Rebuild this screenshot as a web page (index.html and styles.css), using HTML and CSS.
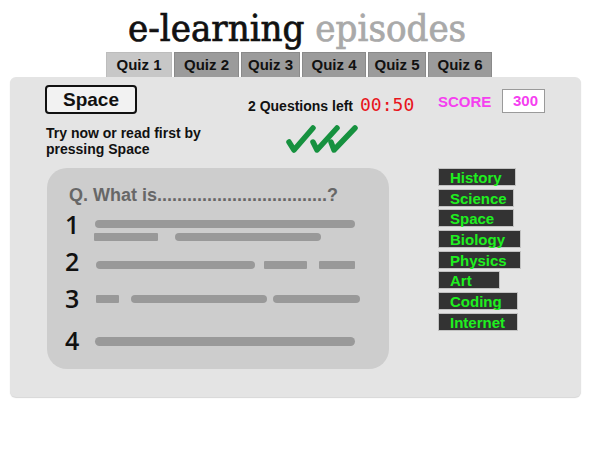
FILE: index.html
```html
<!DOCTYPE html>
<html>
<head>
<meta charset="utf-8">
<link rel="stylesheet" href="styles.css">
</head>
<body>
<header class="title"><span class="t-dark">e-learning</span> <span class="t-light">episodes</span></header>
<nav class="tabs">
  <div class="tab active">Quiz 1</div>
  <div class="tab">Quiz 2</div>
  <div class="tab">Quiz 3</div>
  <div class="tab">Quiz 4</div>
  <div class="tab">Quiz 5</div>
  <div class="tab">Quiz 6</div>
</nav>
<main class="panel">
  <section class="top">
    <div class="intro">
      <div class="space-btn">Space</div>
      <p class="hint">Try now or read first by<br>pressing Space</p>
    </div>
    <div class="status">
      <div class="left-line"><span class="qleft">2 Questions left</span><span class="timer">00:50</span></div>
      <svg class="checks" width="76" height="32" viewBox="0 0 76 32">
        <path d="M4 19 L9 27 L28 5" />
        <path d="M28 19 L32 27 L52 5" />
        <path d="M46 19 L49 27 L70 5" />
      </svg>
    </div>
    <div class="score">
      <span class="score-label">SCORE</span>
      <span class="score-box">300</span>
    </div>
  </section>
  <section class="bottom">
    <div class="card">
      <div class="question">Q. What is..................................?</div>
      <div class="row r1">
        <div class="num">1</div>
        <div class="bars">
          <div class="line"><span class="bar round w260"></span></div>
          <div class="line l2"><span class="bar sq w64 ml-1"></span><span class="bar round w146 ml17"></span></div>
        </div>
      </div>
      <div class="row r2">
        <div class="num">2</div>
        <div class="bars">
          <div class="line"><span class="bar round w159 ml1"></span><span class="bar sq w43 ml9"></span><span class="bar sq w36 ml12"></span></div>
        </div>
      </div>
      <div class="row r3">
        <div class="num">3</div>
        <div class="bars">
          <div class="line"><span class="bar sq w23 ml1"></span><span class="bar round w136 ml12"></span><span class="bar round w87 ml6"></span></div>
        </div>
      </div>
      <div class="row r4">
        <div class="num">4</div>
        <div class="bars">
          <div class="line"><span class="bar round w260 thick"></span></div>
        </div>
      </div>
    </div>
    <ul class="cats">
      <li class="cat c78">History</li>
      <li class="cat c76">Science</li>
      <li class="cat c76">Space</li>
      <li class="cat c83">Biology</li>
      <li class="cat c83">Physics</li>
      <li class="cat c62">Art</li>
      <li class="cat c80">Coding</li>
      <li class="cat c80">Internet</li>
    </ul>
  </section>
</main>
</body>
</html>
```
FILE: styles.css
```css
* { box-sizing: border-box; }
html, body { margin: 0; padding: 0; background: #fff; }
body { width: 600px; height: 450px; font-family: "Liberation Sans", Arial, sans-serif; overflow: hidden; }

.title {
  font-family: "DejaVu Serif Condensed", "DejaVu Serif", serif;
  font-stretch: condensed;
  font-size: 38px;
  line-height: 44px;
  height: 52px;
  padding-top: 6px;
  padding-left: 128px;
  -webkit-text-stroke: 0.7px currentColor;
  white-space: nowrap;
}
.t-dark { color: #111; }
.t-light { color: #a9a9a9; }

.tabs { display: flex; margin-left: 106px; gap: 2px; height: 25px; }
.tab {
  height: 25px;
  background: #9b9b9b;
  border: 1px solid #8a8a8a;
  border-bottom: none;
  font-weight: bold;
  font-size: 15px;
  line-height: 24px;
  text-align: center;
  color: #111;
}
.tab.active { background: #c7c7c7; border-color: #bdbdbd; }
.tab:nth-child(1) { width: 66px; }
.tab:nth-child(2) { width: 65px; }
.tab:nth-child(3) { width: 59px; }
.tab:nth-child(4) { width: 64px; }
.tab:nth-child(5) { width: 58px; }
.tab:nth-child(6) { width: 64px; }

.panel {
  margin-left: 10px;
  width: 571px;
  height: 320px;
  background: #e4e4e4;
  border-radius: 6px;
  box-shadow: 0 1px 1px #d6d6d6;
  padding: 8px 0 0 35px;
}

.top { display: flex; height: 83px; }
.intro { width: 203px; }
.space-btn {
  width: 92px;
  height: 29px;
  border: 2px solid #111;
  border-radius: 4px;
  background: #f2f2f2;
  font-weight: bold;
  font-size: 19px;
  line-height: 25px;
  text-align: center;
  color: #111;
}
.hint { margin: 11px 0 0 1px; font-weight: bold; font-size: 14px; line-height: 16px; color: #111; }

.status { width: 190px; padding-top: 9px; }
.left-line { display: flex; align-items: baseline; }
.qleft { font-weight: bold; font-size: 14px; color: #111; }
.timer { font-family: "DejaVu Sans Mono", monospace; font-size: 18px; color: #e8141c; margin-left: 7px; }
.checks { display: block; margin: 8px 0 0 37px; }
.checks path { fill: none; stroke: #16913f; stroke-width: 5.5; stroke-linecap: round; stroke-linejoin: round; }

.score { display: flex; align-items: center; height: 24px; margin-top: 4px; }
.score-label { font-weight: bold; font-size: 15px; color: #f53ff0; width: 64px; }
.score-box {
  width: 43px; height: 24px;
  background: #fff;
  border: 1px solid #9a9a9a;
  color: #f53ff0;
  font-weight: bold;
  font-size: 15px;
  line-height: 22px;
  text-align: right;
  padding-right: 6px;
}

.bottom { display: flex; }
.card {
  margin-left: 2px;
  width: 342px;
  height: 201px;
  background: #cdcdcd;
  border-radius: 20px;
  padding: 17px 0 0 18px;
}
.question { margin-left: 4px; font-weight: bold; font-size: 18px; line-height: 20px; color: #676767; white-space: nowrap; }

.row { display: flex; align-items: flex-start; }
.r1 { margin-top: 7px; height: 37px; }
.r2 { height: 37px; }
.r3 { height: 42px; }
.r4 { height: 30px; }
.num { width: 30px; font-family: "Open Sans", sans-serif; font-weight: 600; font-size: 25px; line-height: 25px; color: #111; }
.bars { display: flex; flex-direction: column; gap: 5px; }
.r1 .bars { margin-top: 8px; }
.r2 .bars { margin-top: 12px; }
.r3 .bars { margin-top: 9px; }
.r4 .bars { margin-top: 9px; }
.line { display: flex; }
.bar { display: block; height: 8px; background: #999; }
.bar.round { border-radius: 4px; }
.bar.sq { border-radius: 1px; }
.bar.thick { height: 9px; border-radius: 5px; }
.w260 { width: 260px; }
.w64 { width: 64px; }
.w146 { width: 146px; }
.w159 { width: 159px; }
.w43 { width: 43px; }
.w36 { width: 36px; }
.w23 { width: 23px; }
.w136 { width: 136px; }
.w87 { width: 87px; }
.ml-1 { margin-left: -1px; }
.ml1 { margin-left: 1px; }
.ml6 { margin-left: 6px; }
.ml9 { margin-left: 9px; }
.ml12 { margin-left: 12px; }
.ml17 { margin-left: 17px; }

.cats {
  list-style: none;
  margin: 0 0 0 49px;
  padding: 0;
  display: flex;
  flex-direction: column;
  align-items: flex-start;
  gap: 2.7px;
}
.cat {
  height: 18px;
  background: #333;
  border: 1px solid #c2c2c2;
  color: #1ff01f;
  font-weight: bold;
  font-size: 15px;
  line-height: 17px;
  padding-left: 11px;
  white-space: nowrap;
}
.c62 { width: 62px; }
.c76 { width: 76px; }
.c78 { width: 78px; }
.c80 { width: 80px; }
.c83 { width: 83px; }
```
